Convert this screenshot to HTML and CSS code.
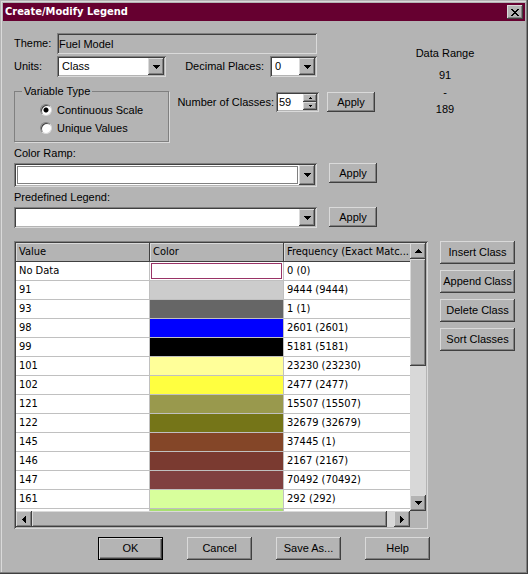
FILE: index.html
```html
<!DOCTYPE html>
<html lang="en">
<head>
<meta charset="utf-8">
<title>Create/Modify Legend</title>
<link rel="stylesheet" href="styles.css">
</head>
<body>
<main class="dialog">
  <header class="titlebar">
    <h1 class="title">Create/Modify Legend</h1>
    <button class="close" type="button" aria-label="Close"><svg width="8" height="7" viewBox="0 0 8 7" shape-rendering="crispEdges"><path d="M0 0h2v1h1v1h2V1h1V0h2v1H7v1H6v1H5v1h1v1h1v1h1v1H6V6H5V5H3v1H2v1H0V6h1V5h1V4h1V3H2V2H1V1H0z"/></svg></button>
  </header>

  <section class="top">
    <form class="form">
      <div class="row theme-row">
        <label class="key" for="theme">Theme:</label>
        <input class="sunken theme" id="theme" value="Fuel Model" readonly>
      </div>
      <div class="row units-row">
        <label class="key" for="units">Units:</label>
        <div class="combo units"><select id="units"><option>Class</option></select><span class="drop"><svg width="7" height="4" viewBox="0 0 7 4" shape-rendering="crispEdges"><path d="M0 0h7v1H6v1H5v1H4v1H3V3H2V2H1V1H0z"/></svg></span></div>
        <label class="places-label" for="places">Decimal Places:</label>
        <div class="combo places"><select id="places"><option>0</option></select><span class="drop"><svg width="7" height="4" viewBox="0 0 7 4" shape-rendering="crispEdges"><path d="M0 0h7v1H6v1H5v1H4v1H3V3H2V2H1V1H0z"/></svg></span></div>
      </div>
      <div class="row type-row">
        <fieldset class="group">
          <legend>Variable Type</legend>
          <label class="choice"><input type="radio" name="type" checked>Continuous Scale</label>
          <label class="choice"><input type="radio" name="type">Unique Values</label>
        </fieldset>
        <div class="row classes">
          <label for="classes">Number of Classes:</label>
          <div class="spin">
            <input id="classes" type="number" value="59">
            <div class="steps">
              <button type="button" aria-label="More"><svg width="3" height="2" viewBox="0 0 3 2" shape-rendering="crispEdges"><path d="M1 0h1v1h1v1H0V1h1z"/></svg></button>
              <button type="button" aria-label="Fewer"><svg width="3" height="2" viewBox="0 0 3 2" shape-rendering="crispEdges"><path d="M0 0h3v1H2v1H1V1H0z"/></svg></button>
            </div>
          </div>
          <button class="btn apply" type="button">Apply</button>
        </div>
      </div>
      <label class="heading" for="ramp">Color Ramp:</label>
      <div class="row pick">
        <div class="combo ramp"><select id="ramp"><option></option></select><span class="drop"><svg width="7" height="4" viewBox="0 0 7 4" shape-rendering="crispEdges"><path d="M0 0h7v1H6v1H5v1H4v1H3V3H2V2H1V1H0z"/></svg></span></div>
        <button class="btn apply" type="button">Apply</button>
      </div>
      <label class="heading" for="predefined">Predefined Legend:</label>
      <div class="row pick">
        <div class="combo"><select id="predefined"><option></option></select><span class="drop"><svg width="7" height="4" viewBox="0 0 7 4" shape-rendering="crispEdges"><path d="M0 0h7v1H6v1H5v1H4v1H3V3H2V2H1V1H0z"/></svg></span></div>
        <button class="btn apply" type="button">Apply</button>
      </div>
    </form>
    <div class="range">
      <span class="range-title">Data Range</span>
      <span>91</span>
      <span>-</span>
      <span>189</span>
    </div>
  </section>

  <section class="middle">
    <div class="grid">
      <div class="view">
        <table>
          <thead><tr><th>Value</th><th>Color</th><th>Frequency (Exact Matc...</th></tr></thead>
          <tbody>
            <tr><td>No Data</td><td class="nodata"></td><td>0 (0)</td></tr>
            <tr><td>91</td><td class="c91"></td><td>9444 (9444)</td></tr>
            <tr><td>93</td><td class="c93"></td><td>1 (1)</td></tr>
            <tr><td>98</td><td class="c98"></td><td>2601 (2601)</td></tr>
            <tr><td>99</td><td class="c99"></td><td>5181 (5181)</td></tr>
            <tr><td>101</td><td class="c101"></td><td>23230 (23230)</td></tr>
            <tr><td>102</td><td class="c102"></td><td>2477 (2477)</td></tr>
            <tr><td>121</td><td class="c121"></td><td>15507 (15507)</td></tr>
            <tr><td>122</td><td class="c122"></td><td>32679 (32679)</td></tr>
            <tr><td>145</td><td class="c145"></td><td>37445 (1)</td></tr>
            <tr><td>146</td><td class="c146"></td><td>2167 (2167)</td></tr>
            <tr><td>147</td><td class="c147"></td><td>70492 (70492)</td></tr>
            <tr><td>161</td><td class="c161"></td><td>292 (292)</td></tr>
            <tr><td></td><td class="c162"></td><td></td></tr>
          </tbody>
        </table>
      </div>
      <div class="vbar">
        <button type="button" aria-label="Scroll up"><svg width="7" height="4" viewBox="0 0 7 4" shape-rendering="crispEdges"><path d="M3 0h1v1h1v1h1v1h1v1H0V3h1V2h1V1h1z"/></svg></button>
        <div class="thumb"></div>
        <button type="button" aria-label="Scroll down"><svg width="7" height="4" viewBox="0 0 7 4" shape-rendering="crispEdges"><path d="M0 0h7v1H6v1H5v1H4v1H3V3H2V2H1V1H0z"/></svg></button>
      </div>
      <div class="hbar">
        <button type="button" aria-label="Scroll left"><svg width="4" height="7" viewBox="0 0 4 7" shape-rendering="crispEdges"><path d="M3 0h1v7H3V6H2V5H1V4H0V3h1V2h1V1h1z"/></svg></button>
        <div class="thumb"></div>
        <button type="button" aria-label="Scroll right"><svg width="4" height="7" viewBox="0 0 4 7" shape-rendering="crispEdges"><path d="M0 0h1v1h1v1h1v1h1v1H3v1H2v1H1v1H0z"/></svg></button>
      </div>
    </div>
    <div class="side">
      <button class="btn" type="button">Insert Class</button>
      <button class="btn" type="button">Append Class</button>
      <button class="btn" type="button">Delete Class</button>
      <button class="btn" type="button">Sort Classes</button>
    </div>
  </section>

  <footer class="footer">
    <button class="btn default" type="button">OK</button>
    <button class="btn" type="button">Cancel</button>
    <button class="btn" type="button">Save As...</button>
    <button class="btn" type="button">Help</button>
  </footer>
</main>
</body>
</html>
```
FILE: styles.css
```css
:root {
  --face: #b4b4b4;
  --light: #dadada;
  --shade: #808080;
  --dark: #404040;
  --raised: inset -1px -1px var(--dark), inset 1px 1px var(--light), inset -2px -2px var(--shade);
  --sunken: inset 1px 1px var(--shade), inset -1px -1px var(--light), inset 2px 2px var(--dark), inset -2px -2px var(--face);
}

* { box-sizing: border-box; }

body {
  margin: 0;
  background: var(--face);
  color: #000;
  font: 11px/13px "Liberation Sans", Arial, sans-serif;
}

input, select, button {
  margin: 0;
  border: 0;
  padding: 0;
  border-radius: 0;
  background: none;
  color: inherit;
  font: inherit;
}

.dialog {
  min-height: 100vh;
  padding: 3px;
  background: var(--face);
  box-shadow: inset -1px -1px var(--dark), inset -2px -2px var(--shade), inset 1px 1px var(--face), inset 2px 2px var(--light);
}

.titlebar {
  display: flex;
  align-items: center;
  justify-content: space-between;
  height: 18px;
  padding: 0 2px;
  background: #660030;
  color: #fff;
}

.title {
  margin: 0;
  font: bold 11px/18px "DejaVu Sans Condensed", Tahoma, sans-serif;
}

.close {
  display: grid;
  place-items: center;
  width: 16px;
  height: 14px;
  background: var(--face);
  box-shadow: var(--raised);
  color: #000;
}

.top {
  display: flex;
  padding: 12px 12px 0 11px;
}

.form { flex: 1; }
.row { display: flex; align-items: center; }

.theme-row, .units-row { margin-right: 60px; }
.units-row { margin-top: 2px; }
.key { width: 43px; flex: none; }

.sunken, .combo, .spin { box-shadow: var(--sunken); }

.theme {
  flex: 1;
  min-width: 0;
  height: 21px;
  padding: 0 2px;
}

.combo {
  display: flex;
  flex: 1;
  height: 21px;
  padding: 2px;
  background: #fff;
}

.combo select {
  flex: 1;
  min-width: 0;
  padding-left: 3px;
  appearance: none;
  outline: 0;
}

.drop {
  display: grid;
  place-items: center;
  width: 16px;
  background: var(--face);
  box-shadow: var(--raised);
}

.combo.units { flex: none; width: 109px; }
.combo.places { flex: none; width: 47px; }
.places-label { margin-left: auto; margin-right: 6px; }

.type-row { align-items: flex-start; margin: 8px 0 5px; }

.group {
  width: 155px;
  margin: 0;
  border: 1px solid var(--shade);
  padding: 3px 0 4px 25px;
  box-shadow: 1px 1px var(--light);
}

.group legend { margin-left: -18px; padding: 0 2px; }

.choice {
  display: flex;
  align-items: center;
  gap: 5px;
  height: 18px;
}

.choice input {
  width: 12px;
  height: 12px;
  border: 1px solid;
  border-color: var(--shade) var(--light) var(--light) var(--shade);
  border-radius: 50%;
  background: #fff;
  box-shadow: inset 1px 1px var(--dark);
  appearance: none;
}

.choice input:checked { background: radial-gradient(circle, #000 2px, #fff 3px); }

.classes { flex: 1; justify-content: flex-end; margin-top: 7px; padding-right: 2px; }

.spin {
  display: flex;
  width: 43px;
  height: 20px;
  margin: 0 8px 0 2px;
  padding: 2px;
  background: #fff;
}

.spin input {
  flex: 1;
  min-width: 0;
  padding-left: 1px;
  appearance: textfield;
}

.spin input::-webkit-inner-spin-button { appearance: none; }

.steps { display: grid; width: 14px; }

.steps button {
  display: grid;
  place-items: center;
  background: var(--face);
  box-shadow: var(--raised);
}

.btn {
  height: 23px;
  background: var(--face);
  box-shadow: var(--raised);
}

.apply { flex: none; width: 48px; height: 20px; }

.heading { display: block; margin: 4px 0 3px; }
.pick { align-items: flex-start; gap: 12px; }
.combo.ramp { height: 24px; }
.combo.ramp select { margin: 1px; border: 1px solid var(--shade); }

.range {
  display: grid;
  align-content: start;
  justify-items: center;
  gap: 4px;
  width: 136px;
  padding-top: 14px;
}

.range-title { margin-bottom: 5px; }
.range, .title { white-space: nowrap; }

.middle {
  display: flex;
  align-items: flex-start;
  gap: 12px;
  padding: 13px 10px 0 11px;
}

.grid {
  display: grid;
  grid-template-columns: minmax(0, 1fr) 16px;
  grid-template-rows: 268px 16px;
  flex: 1;
  min-width: 0;
  padding: 2px;
  box-shadow: var(--sunken);
}

.view { overflow: hidden; background: #fff; }

table {
  width: 100%;
  border-collapse: separate;
  border-spacing: 0;
  table-layout: fixed;
  font: 11px/14px "DejaVu Sans Condensed", Tahoma, sans-serif;
}

th, td {
  height: 19px;
  border: 0 solid #c0c0c0;
  border-width: 0 1px 1px 0;
  padding: 0 0 0 3px;
  overflow: hidden;
  text-align: left;
  white-space: nowrap;
}

th {
  border-color: var(--dark);
  background: var(--face);
  box-shadow: inset 1px 1px var(--light);
  font-weight: normal;
}

th:nth-child(-n+2) { width: 134px; }
th:last-child, td:last-child { border-right: 0; }

.nodata { box-shadow: inset 0 0 0 1px #fff, inset 0 0 0 2px #993366; }
.c91 { background: #cccccc; }
.c93 { background: #666666; }
.c98 { background: #0000ff; }
.c99 { background: #000000; }
.c101 { background: #ffff99; }
.c102 { background: #ffff40; }
.c121 { background: #99994d; }
.c122 { background: #757518; }
.c145 { background: #844628; }
.c146 { background: #7a3a30; }
.c147 { background: #804040; }
.c161 { background: #d8ff9c; }
.c162 { background: #a8e070; }

.vbar, .hbar { display: flex; background: #d8d8d8; }
.vbar { flex-direction: column; }

.vbar button, .hbar button {
  display: grid;
  place-items: center;
  flex: none;
  width: 16px;
  height: 16px;
}

.vbar button, .hbar button, .thumb {
  background: var(--face);
  box-shadow: var(--raised);
}

.vbar .thumb { height: 107px; margin-bottom: auto; }
.hbar .thumb { flex: 1; margin-right: 7px; }

.side {
  display: grid;
  gap: 6px;
  width: 75px;
}

.footer {
  display: flex;
  justify-content: center;
  gap: 24px;
  padding: 8px 0 11px;
}

.footer .btn { width: 65px; }
.btn.default { box-shadow: inset 0 0 0 1px #000, inset 2px 2px var(--light), inset -2px -2px var(--dark), inset -3px -3px var(--shade); }
```
